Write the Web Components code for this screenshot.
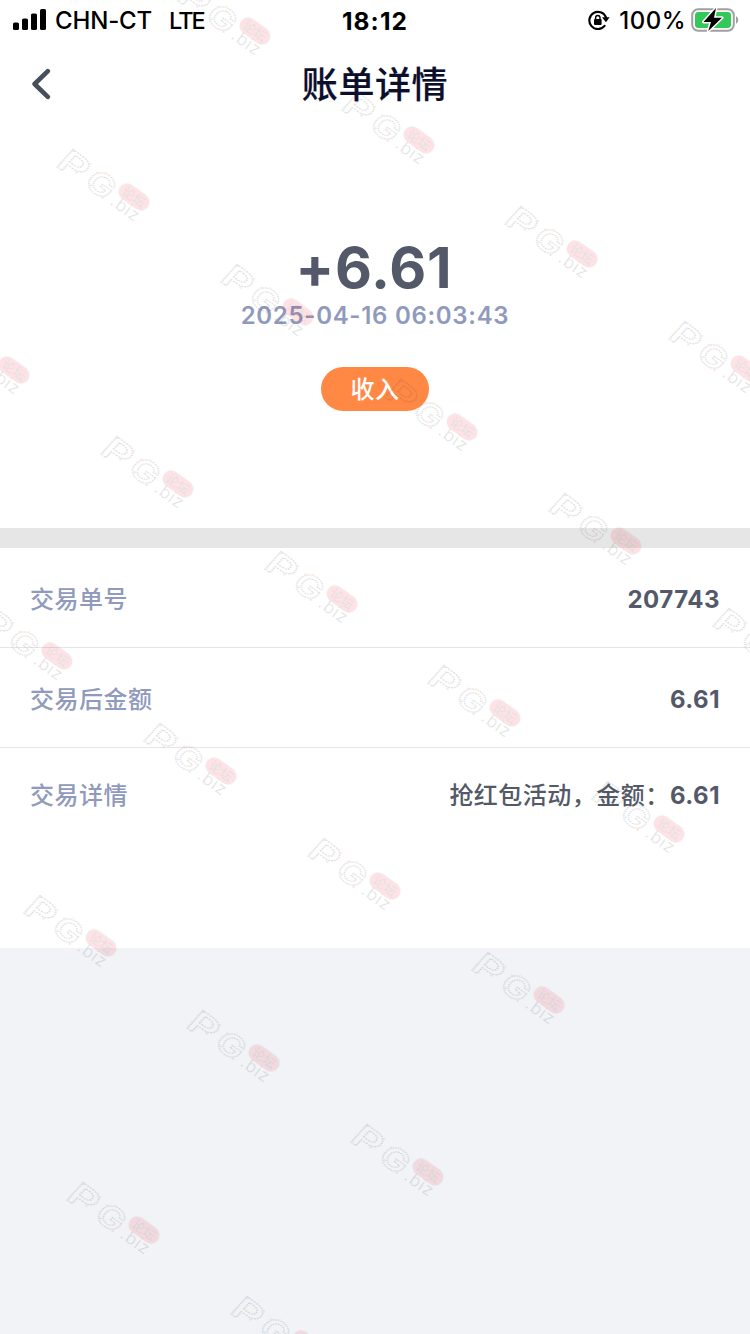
<!DOCTYPE html>
<html lang="zh-CN">
<head>
<meta charset="utf-8">
<meta name="viewport" content="width=750">
<title>账单详情</title>
<style>
  body {
    margin: 0;
    background: #f1f3f7;
    font-family: Inter, "Noto Sans CJK SC", sans-serif;
  }
</style>
</head>
<body>
<bill-page>
  <status-bar slot="top" carrier="CHN-CT" network="LTE" time="18:12" battery="100%"></status-bar>
  <nav-bar slot="top">账单详情</nav-bar>
  <bill-summary slot="summary" amount="+6.61" time="2025-04-16 06:03:43">收入</bill-summary>
  <bill-row label="交易单号"><b>207743</b></bill-row>
  <bill-row label="交易后金额"><b>6.61</b></bill-row>
  <bill-row label="交易详情" last>抢红包活动，金额：<b>6.61</b></bill-row>
</bill-page>

<script>
class BillPage extends HTMLElement {
  constructor() {
    super();
    this.attachShadow({ mode: "open" });
  }

  connectedCallback() {
    this.shadowRoot.innerHTML = `
      <style>
        :host {
          display: flex;
          flex-direction: column;
          position: relative;
          height: 1334px;
          overflow: hidden;
        }
        header, section { background: #fff; }
        .list { border-top: 20px solid #e6e6e6; }
      </style>
      <header><slot name="top"></slot></header>
      <section><slot name="summary"></slot></section>
      <section class="list"><slot></slot></section>
      <water-mark></water-mark>
    `;
  }
}

class StatusBar extends HTMLElement {
  constructor() {
    super();
    this.attachShadow({ mode: "open" });
  }

  connectedCallback() {
    this.shadowRoot.innerHTML = `
      <style>
        :host {
          display: grid;
          grid-template-columns: 1fr auto 1fr;
          align-items: center;
          height: 40px;
          padding: 0 10px 0 13px;
          color: #000;
          font-size: 24px;
          font-weight: 500;
          line-height: 40px;
        }
        div { display: flex; align-items: center; }
        span { padding-top: 2px; line-height: 38px; }
        svg { display: block; flex: none; }
        .carrier { margin-left: 8px; letter-spacing: -0.15px; }
        .network { margin-left: 17px; font-size: 23.5px; font-weight: 550; letter-spacing: -2px; }
        .time { margin-right: 3px; font-size: 24.5px; font-weight: 750; letter-spacing: 1.1px; }
        .right { justify-content: flex-end; }
        .battery { margin: 0 5px 0 9px; letter-spacing: 0.5px; }
      </style>
      <div>
        <svg width="34" height="22" viewBox="0 0 34 22">
          <rect x="0" y="13.5" width="6" height="7.5" rx="1.6"/>
          <rect x="9" y="9.5" width="6" height="11.5" rx="1.6"/>
          <rect x="18" y="4.5" width="6" height="16.5" rx="1.6"/>
          <rect x="27" y="0" width="6" height="21" rx="1.6"/>
        </svg>
        <span class="carrier">${this.getAttribute("carrier")}</span>
        <span class="network">${this.getAttribute("network")}</span>
      </div>
      <span class="time">${this.getAttribute("time")}</span>
      <div class="right">
        <svg width="22" height="20" viewBox="0 0 22 20">
          <path d="M16.6 15.9 A8.6 8.6 0 1 1 17.9 7.2" fill="none" stroke="#000" stroke-width="2.2" stroke-linecap="round"/>
          <path d="M14 7.3 H21.6 L18 12.3 Z"/>
          <rect x="6" y="9" width="7.6" height="6" rx="1"/>
          <path d="M7.6 9.5 V7.7 a2.2 2.2 0 0 1 4.4 0 V9.5" fill="none" stroke="#000" stroke-width="1.4"/>
        </svg>
        <span class="battery">${this.getAttribute("battery")}</span>
        <svg width="49" height="26" viewBox="0 0 49 26">
          <rect x="1.2" y="2.2" width="41.6" height="21.6" rx="6" fill="none" stroke="#a0a0a0" stroke-width="2"/>
          <rect x="4" y="5" width="36" height="16" rx="3.4" fill="#34c759"/>
          <path d="M45 9 v8 a4.6 4.6 0 0 0 0 -8 Z" fill="#a0a0a0"/>
          <path d="M25 1 L12.5 15 H20 L17.3 24 L31 10.7 H23 Z" fill="#000" stroke="#fff" stroke-width="3" stroke-linejoin="round" paint-order="stroke"/>
        </svg>
      </div>
    `;
  }
}

class NavBar extends HTMLElement {
  constructor() {
    super();
    this.attachShadow({ mode: "open" });
  }

  connectedCallback() {
    this.shadowRoot.innerHTML = `
      <style>
        :host {
          display: grid;
          grid-template-columns: 1fr auto 1fr;
          align-items: center;
          height: 88px;
          padding: 0 31px;
          color: #0c0f2b;
          font-size: 36px;
          font-weight: 500;
          letter-spacing: 0.6px;
        }
        svg { display: block; }
        .title {
          padding-bottom: 4px;
          -webkit-text-stroke: 0.2px;
        }
      </style>
      <svg width="20" height="32" viewBox="0 0 20 32">
        <path d="M16.8 3.2 L3.6 16 L16.8 28.8" fill="none" stroke="#474e5c" stroke-width="4.6" stroke-linecap="round" stroke-linejoin="round"/>
      </svg>
      <span class="title"><slot></slot></span>
    `;
  }
}

class BillSummary extends HTMLElement {
  constructor() {
    super();
    this.attachShadow({ mode: "open" });
  }

  connectedCallback() {
    this.shadowRoot.innerHTML = `
      <style>
        :host {
          display: flex;
          flex-direction: column;
          align-items: center;
          box-sizing: border-box;
          height: 400px;
          padding-top: 106px;
        }
        .amount {
          margin-right: 2px;
          color: #535968;
          font-size: 57px;
          font-weight: 700;
          line-height: 68px;
          letter-spacing: 0.8px;
        }
        .time {
          color: #909abd;
          font-size: 24px;
          font-weight: 600;
          line-height: 28px;
          letter-spacing: 0.7px;
        }
        .tag {
          width: 108px;
          height: 44px;
          margin-top: 37px;
          border-radius: 22px;
          background: #ff8845;
          color: #fff;
          font-size: 24px;
          font-weight: 500;
          line-height: 46px;
          letter-spacing: 0.6px;
          text-align: center;
        }
      </style>
      <div class="amount">${this.getAttribute("amount")}</div>
      <div class="time">${this.getAttribute("time")}</div>
      <div class="tag"><slot></slot></div>
    `;
  }
}

class BillRow extends HTMLElement {
  constructor() {
    super();
    this.attachShadow({ mode: "open" });
  }

  connectedCallback() {
    this.shadowRoot.innerHTML = `
      <style>
        :host {
          display: flex;
          justify-content: space-between;
          box-sizing: border-box;
          height: 100px;
          padding: 0 30px;
          border-bottom: 1px solid #e5e5e6;
          font-size: 24px;
          font-weight: 500;
          line-height: 103px;
          letter-spacing: 0.5px;
        }
        :host([last]) {
          height: 200px;
          border-bottom: 0;
          line-height: 95px;
        }
        .label { color: #909abd; }
        .value {
          margin-top: -2px;
          color: #535968;
          font-family: "Noto Sans CJK SC", sans-serif;
        }
        ::slotted(b) {
          font-family: Inter, sans-serif;
          font-weight: 650;
          letter-spacing: 0.5px;
        }
      </style>
      <span class="label">${this.getAttribute("label")}</span>
      <span class="value"><slot></slot></span>
    `;
  }
}

// Repeated diagonal logo laid over the whole page
class WaterMark extends HTMLElement {
  constructor() {
    super();
    this.attachShadow({ mode: "open" });
  }

  connectedCallback() {
    // centre of the red badge in every mark
    const marks = [
      [255, 31], [419, 140], [134, 197], [582, 254], [298, 312],
      [14, 370], [746, 369], [462, 427], [178, 484], [626, 541],
      [342, 599], [57, 656], [790, 656], [505, 713], [221, 771],
      [669, 829], [385, 886], [101, 943], [549, 1000], [264, 1058],
      [428, 1172], [144, 1230], [308, 1344]
    ];
    const logo = ([x, y]) => `
      <g transform="translate(${x} ${y}) rotate(36)">
        <g class="outline">
          <text transform="translate(-83 21) skewX(-6) scale(1.45 1.05)">P</text>
          <text transform="translate(-49 20) skewX(-6) scale(1.2 1)">G</text>
        </g>
        <circle cx="-76" cy="-2" r="1.3" fill="#5a4cff"/>
        <circle cx="-55" cy="-1" r="1.3" fill="#ff8a3c"/>
        <circle cx="-79" cy="20" r="1.3" fill="#2fd8d0"/>
        <circle cx="-61" cy="14" r="1.3" fill="#e84ae0"/>
        <circle cx="-44" cy="2" r="1.3" fill="#ff4a4a"/>
        <circle cx="-37" cy="-3" r="1.3" fill="#ffc22f"/>
        <circle cx="-42" cy="16" r="1.3" fill="#3c8aff"/>
        <circle cx="-25" cy="19" r="1.3" fill="#ff4a4a"/>
        <rect x="-18" y="-9.5" width="36" height="18" rx="9" fill="#7ff" opacity=".6"/>
        <rect x="-17" y="-8.5" width="34" height="17" rx="8.5" fill="#ff3c4c"/>
        <text class="badge" x="0" y="5" text-anchor="middle">论坛</text>
        <text class="domain" x="-16" y="20" textLength="31">.biz</text>
      </g>`;
    this.shadowRoot.innerHTML = `
      <style>
        :host {
          display: block;
          position: absolute;
          inset: 0;
          pointer-events: none;
        }
        svg { display: block; opacity: 0.14; }
        .outline {
          fill: none;
          stroke: #333;
          stroke-width: 1.2;
          stroke-dasharray: 1.4 0.8;
          font: 600 31px Inter, sans-serif;
        }
        .badge {
          fill: #333;
          font: 400 13px "Noto Sans CJK SC", sans-serif;
        }
        .domain {
          fill: #444;
          font: 300 17px Inter, sans-serif;
        }
      </style>
      <svg width="750" height="1334" viewBox="0 0 750 1334">${marks.map(logo).join("")}</svg>
    `;
  }
}

customElements.define("bill-page", BillPage);
customElements.define("status-bar", StatusBar);
customElements.define("nav-bar", NavBar);
customElements.define("bill-summary", BillSummary);
customElements.define("bill-row", BillRow);
customElements.define("water-mark", WaterMark);
</script>
</body>
</html>
